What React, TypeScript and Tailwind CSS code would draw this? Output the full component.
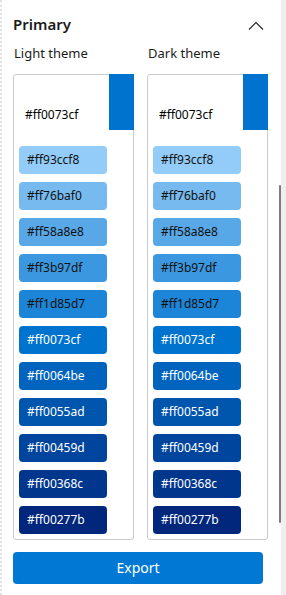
import React from "react";

const swatches = [
  { c: "#93ccf8", dark: false },
  { c: "#76baf0", dark: false },
  { c: "#58a8e8", dark: false },
  { c: "#3b97df", dark: false },
  { c: "#1d85d7", dark: false },
  { c: "#0073cf", dark: true },
  { c: "#0064be", dark: true },
  { c: "#0055ad", dark: true },
  { c: "#00459d", dark: true },
  { c: "#00368c", dark: true },
  { c: "#00277b", dark: true },
];

function Column({ label }: { label: string }) {
  return (
    <div className="flex flex-col w-[121px]">
      <div className="text-[13px] leading-[18px] text-[#1b1b1b] pl-[1px]">{label}</div>
      <div className="relative mt-[12px] h-[466px] border border-[#cbcbcb] rounded-[3px] bg-white">
        <div className="absolute top-[-1px] right-[-1px] w-[25px] h-[56px] bg-[#0073cf]" />
        <div className="pl-[11px] pt-[31px] h-[71px] text-[12px] leading-[18px] text-black">#ff0073cf</div>
        <div className="flex flex-col gap-[8px] pl-[5px]">
          {swatches.map((s) => (
            <div
              key={s.c}
              className={
                "w-[88px] h-[28px] rounded-[4px] flex items-center pl-[8px] text-[12px] " +
                (s.dark ? "text-white" : "text-[#111]")
              }
              style={{ backgroundColor: s.c }}
            >
              #ff{s.c.slice(1)}
            </div>
          ))}
        </div>
      </div>
    </div>
  );
}

export default function App() {
  return (
    <div
      className="relative w-[286px] h-[595px] bg-white overflow-hidden border-l-2 border-dotted border-[#e2e2e2]"
      style={{ fontFamily: '"Noto Sans", "Open Sans", sans-serif' }}
    >
      <div className="absolute top-0 right-0 w-[5px] h-full bg-[#efefef]" />
      <div className="absolute left-[277px] top-[185px] w-[2px] h-[338px] rounded-full bg-[#7d7d7d]" />
      <div className="pl-[11px] w-[268px]">
        <div className="flex items-center justify-between pt-[11px] h-[36px]">
          <div className="text-[15px] leading-[20px] font-semibold text-[#1b1b1b]">Primary</div>
          <svg width="16" height="10" viewBox="0 0 16 10" className="mr-[6px] mt-[4px]">
            <polyline points="1,8.5 8,1.5 15,8.5" fill="none" stroke="#222" strokeWidth="1.1" />
          </svg>
        </div>
        <div className="flex gap-[13px] mt-[8px]">
          <Column label="Light theme" />
          <Column label="Dark theme" />
        </div>
        <button className="mt-[12px] w-[250px] h-[32px] rounded-[4px] bg-[#0078d4] text-white text-[14px] leading-[20px] flex items-center justify-center">
          Export
        </button>
      </div>
    </div>
  );
}
